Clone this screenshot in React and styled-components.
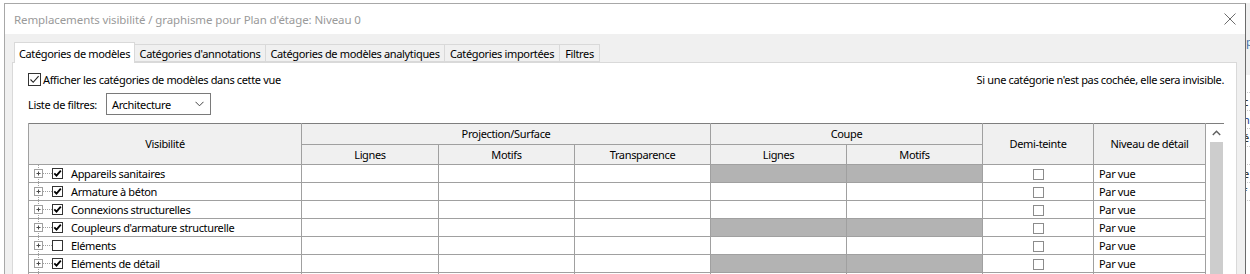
import React from "react";
import styled, { createGlobalStyle } from "styled-components";

const GlobalStyle = createGlobalStyle`
  html, body {
    margin: 0;
    padding: 0;
    background: #fff;
  }
  body {
    font-family: "Noto Sans", "Liberation Sans", sans-serif;
    font-size: 11px;
    letter-spacing: -0.35px;
    color: #000;
  }
`;

const Page = styled.div`
  display: flex;
  height: 274px;
  padding-top: 3px;
  box-sizing: border-box;
  overflow: hidden;
`;

const Dialog = styled.div`
  width: 1242px;
  margin-left: 4px;
  box-sizing: border-box;
  border-top: 1px solid #a8a8a8;
  border-left: 1px solid #a8a8a8;
  border-right: 1px solid #6b6b6b;
  display: flex;
  flex-direction: column;
`;

const TitleBar = styled.div`
  height: 30px;
  flex: none;
  display: flex;
  align-items: center;
  justify-content: space-between;
  padding: 0 9px 0 9px;
  background: #fff;
  color: #9a9a9a;
  font-size: 11.5px;
  letter-spacing: -0.1px;
`;

const Body = styled.div`
  flex: 1;
  background: #f0f0f0;
  padding: 7px 8px 0 7px;
  display: flex;
  flex-direction: column;
`;

const TabRow = styled.div`
  display: flex;
  align-items: flex-end;
  padding-left: 2px;
  height: 21px;
  position: relative;
  z-index: 1;
`;

const Tab = styled.div`
  box-sizing: border-box;
  width: ${(p) => p.$w}px;
  height: ${(p) => (p.$active ? "21px" : "18px")};
  display: flex;
  align-items: center;
  justify-content: center;
  border: 1px solid #d9d9d9;
  border-bottom: ${(p) => (p.$active ? "none" : "1px solid #d9d9d9")};
  border-left: ${(p) => (p.$active ? "1px solid #d9d9d9" : "none")};
  background: ${(p) => (p.$active ? "#fff" : "#f0f0f0")};
  white-space: nowrap;
  margin-bottom: ${(p) => (p.$active ? "-1px" : "0")};
`;

const Panel = styled.div`
  flex: 1;
  background: #fff;
  border: 1px solid #d9d9d9;
  border-bottom: none;
  padding: 9px 12px 0 15px;
  display: flex;
  flex-direction: column;
`;

const OptionRow = styled.div`
  display: flex;
  align-items: center;
  justify-content: space-between;
  height: 15px;
`;

const CheckLabel = styled.label`
  display: flex;
  align-items: center;
  gap: 2px;
`;

const BigBox = styled.span`
  width: 13px;
  height: 13px;
  box-sizing: border-box;
  border: 1px solid #333;
  display: inline-flex;
  align-items: center;
  justify-content: center;
`;

const FilterRow = styled.div`
  display: flex;
  align-items: center;
  margin-top: 6px;
  gap: 9px;
`;

const Select = styled.div`
  width: 105px;
  height: 22px;
  box-sizing: border-box;
  border: 1px solid #7a7a7a;
  display: flex;
  align-items: center;
  justify-content: space-between;
  padding: 0 6px 0 5px;
`;

const GridWrap = styled.div`
  display: flex;
  margin-top: 8px;
  width: 1196px;
`;

const Table = styled.table`
  width: 1177px;
  table-layout: fixed;
  border-collapse: collapse;
  border-top: 1px solid #7e7e7e;
  border-left: 1px solid #a0a0a0;
`;

const HeadCell = styled.th`
  background: #f0f0f0;
  font-weight: normal;
  border: 1px solid #a0a0a0;
  border-top: none;
  height: ${(p) => p.$h || 20}px;
  padding: 0;
  text-align: center;
  vertical-align: middle;
  line-height: 14px;
`;

const Cell = styled.td`
  border: 1px solid #a0a0a0;
  border-top: none;
  height: 17px;
  padding: 0;
  background: ${(p) =>
    p.$hatch
      ? "repeating-conic-gradient(#666 0 25%, #fff 0 50%) 0 0 / 2px 2px"
      : "#fff"};
  text-align: ${(p) => p.$align || "left"};
  vertical-align: middle;
  line-height: 14px;
`;

const NameCell = styled.div`
  display: flex;
  align-items: center;
  height: 17px;
  padding-left: 3px;
  white-space: nowrap;
`;

const SmallBox = styled.span`
  width: 11px;
  height: 11px;
  box-sizing: border-box;
  border: 1px solid ${(p) => (p.$light ? "#8c8c8c" : "#333")};
  display: inline-flex;
  align-items: center;
  justify-content: center;
  background: #fff;
  vertical-align: middle;
  margin-right: ${(p) => p.$mr || 0}px;
`;

const DetailText = styled.span`
  padding-left: 5px;
`;

const Scrollbar = styled.div`
  width: 19px;
  border-top: 1px solid #7e7e7e;
  display: flex;
  flex-direction: column;
  background: #fff;
`;

const ScrollArrow = styled.div`
  height: 18px;
  display: flex;
  align-items: center;
  justify-content: center;
  padding-left: 2px;
`;

const ScrollThumb = styled.div`
  flex: 1;
  margin-left: 4px;
  margin-right: 1px;
  background: #cdcdcd;
`;

const SideStrip = styled.div`
  flex: 1;
  display: flex;
  flex-direction: column;
  overflow: hidden;
  font-size: 11px;
  line-height: 17px;
`;

const SideTop = styled.div`
  height: 72px;
  background: #f0f0f0;
  color: #3a6ea5;
  padding-top: 30px;
  box-sizing: border-box;
`;

const SideLine = styled.div`
  height: 17px;
  margin-left: -3px;
  border-bottom: 1px dotted #c8c8c8;
  color: ${(p) => p.$color || "#222"};
`;

const CloseIcon = () => (
  <svg width="12" height="12" viewBox="0 0 12 12">
    <path d="M0.5 0.5 L11.5 11.5 M11.5 0.5 L0.5 11.5" stroke="#6d6d6d" strokeWidth="1" />
  </svg>
);

const Chevron = () => (
  <svg width="9" height="6" viewBox="0 0 9 6">
    <path d="M0.5 0.8 L4.5 4.8 L8.5 0.8" fill="none" stroke="#444" strokeWidth="1" />
  </svg>
);

const ThinCheck = () => (
  <svg width="11" height="11" viewBox="0 0 11 11">
    <path d="M1.5 5.5 L4.2 8.3 L9.6 2.2" fill="none" stroke="#222" strokeWidth="1.1" />
  </svg>
);

const BoldCheck = () => (
  <svg width="9" height="9" viewBox="0 0 9 9">
    <path d="M1.3 4.3 L3.5 6.6 L7.8 1.6" fill="none" stroke="#000" strokeWidth="1.8" />
  </svg>
);

const UpArrow = () => (
  <svg width="9" height="6" viewBox="0 0 9 6">
    <path d="M0.8 5 L4.5 1.3 L8.2 5" fill="none" stroke="#606060" strokeWidth="1.4" />
  </svg>
);

const Expander = () => (
  <svg width="20" height="17" viewBox="0 0 20 17" style={{ flex: "none" }}>
    <path d="M6.5 0 V17" stroke="#a0a0a0" strokeDasharray="1 1" />
    <rect x="2.5" y="4.5" width="8" height="8" fill="#fff" stroke="#a0a0a0" />
    <path d="M4.5 8.5 H8.5 M6.5 6.5 V10.5" stroke="#4a4a4a" />
    <path d="M11 8.5 H20" stroke="#a0a0a0" strokeDasharray="1 1" />
  </svg>
);

const tabs = [
  { label: "Catégories de modèles", w: 121 },
  { label: "Catégories d'annotations", w: 131 },
  { label: "Catégories de modèles analytiques", w: 179 },
  { label: "Catégories importées", w: 115 },
  { label: "Filtres", w: 40 },
];

const rows = [
  { name: "Appareils sanitaires", on: true, hatch: true },
  { name: "Armature à béton", on: true, hatch: false },
  { name: "Connexions structurelles", on: true, hatch: false },
  { name: "Coupleurs d'armature structurelle", on: true, hatch: true },
  { name: "Eléments", on: false, hatch: false },
  { name: "Eléments de détail", on: true, hatch: true },
  { name: "Equipement de génie climatique", on: true, hatch: false },
];

const widths = [273, 137, 136, 136, 136, 136, 111, 112];

export default function App() {
  return (
    <>
      <GlobalStyle />
      <Page>
        <Dialog>
          <TitleBar>
            <span>Remplacements visibilité / graphisme pour Plan d'étage: Niveau 0</span>
            <CloseIcon />
          </TitleBar>
          <Body>
            <TabRow>
              {tabs.map((t, i) => (
                <Tab key={t.label} $w={t.w} $active={i === 0}>
                  {t.label}
                </Tab>
              ))}
            </TabRow>
            <Panel>
              <OptionRow>
                <CheckLabel>
                  <BigBox>
                    <ThinCheck />
                  </BigBox>
                  Afficher les catégories de modèles dans cette vue
                </CheckLabel>
                <span>Si une catégorie n'est pas cochée, elle sera invisible.</span>
              </OptionRow>
              <FilterRow>
                <span>Liste de filtres:</span>
                <Select>
                  <span>Architecture</span>
                  <Chevron />
                </Select>
              </FilterRow>
              <GridWrap>
                <Table>
                  <colgroup>
                    {widths.map((w, i) => (
                      <col key={i} style={{ width: w }} />
                    ))}
                  </colgroup>
                  <thead>
                    <tr>
                      <HeadCell rowSpan={2}>Visibilité</HeadCell>
                      <HeadCell colSpan={3} $h={20}>Projection/Surface</HeadCell>
                      <HeadCell colSpan={2} $h={20}>Coupe</HeadCell>
                      <HeadCell rowSpan={2}>Demi-teinte</HeadCell>
                      <HeadCell rowSpan={2}>Niveau de détail</HeadCell>
                    </tr>
                    <tr>
                      <HeadCell $h={19}>Lignes</HeadCell>
                      <HeadCell $h={19}>Motifs</HeadCell>
                      <HeadCell $h={19}>Transparence</HeadCell>
                      <HeadCell $h={19}>Lignes</HeadCell>
                      <HeadCell $h={19}>Motifs</HeadCell>
                    </tr>
                  </thead>
                  <tbody>
                    {rows.map((r) => (
                      <tr key={r.name}>
                        <Cell>
                          <NameCell>
                            <Expander />
                            <SmallBox $mr={8}>{r.on && <BoldCheck />}</SmallBox>
                            {r.name}
                          </NameCell>
                        </Cell>
                        <Cell />
                        <Cell />
                        <Cell />
                        <Cell $hatch={r.hatch} />
                        <Cell $hatch={r.hatch} />
                        <Cell $align="center">
                          <SmallBox $light />
                        </Cell>
                        <Cell>
                          <DetailText>Par vue</DetailText>
                        </Cell>
                      </tr>
                    ))}
                  </tbody>
                </Table>
                <Scrollbar>
                  <ScrollArrow>
                    <UpArrow />
                  </ScrollArrow>
                  <ScrollThumb />
                </Scrollbar>
              </GridWrap>
            </Panel>
          </Body>
        </Dialog>
        <SideStrip>
          <SideTop>p</SideTop>
          <SideLine />
          <SideLine>c</SideLine>
          <SideLine $color="#1a3c8a">n</SideLine>
          <SideLine>é</SideLine>
          <SideLine />
          <SideLine>e</SideLine>
          <SideLine>f</SideLine>
        </SideStrip>
      </Page>
    </>
  );
}
